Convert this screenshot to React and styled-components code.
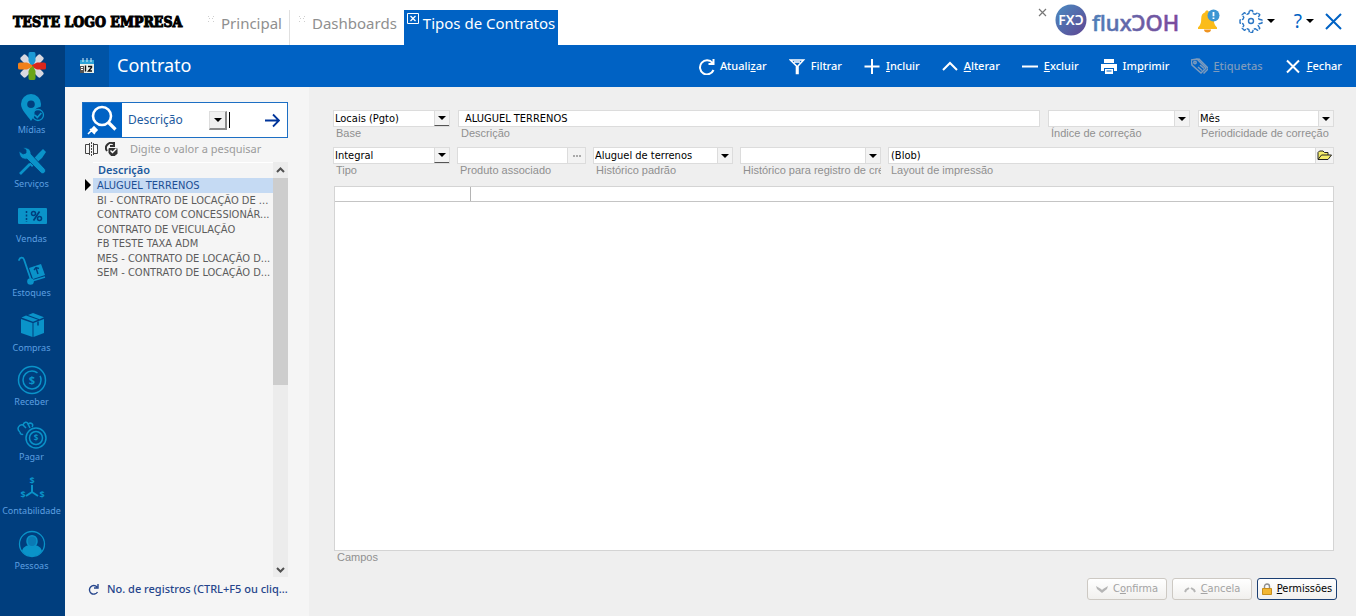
import React from 'react';
import styled, { createGlobalStyle } from 'styled-components';

const GlobalStyle = createGlobalStyle`
  *, *::before, *::after { box-sizing: border-box; }
  body { margin: 0; background: #efefef; }
  button, input, select { font: inherit; color: inherit; margin: 0; padding: 0; border: 0; background: none; outline: none; }
  button { cursor: pointer; }
  svg { display: block; flex: none; }
`;

const ui = '"Noto Sans", "Open Sans", sans-serif';
const tahoma = '"DejaVu Sans Condensed", "DejaVu Sans", sans-serif';
const arial = '"Liberation Sans", Arial, sans-serif';

/* Underlines the access key of a caption */
const Caption = ({ text, accessKey }) => {
  const at = accessKey ? text.indexOf(accessKey) : -1;
  if (at < 0) return <span>{text}</span>;
  return (
    <span>
      {text.slice(0, at)}
      <u>{accessKey}</u>
      {text.slice(at + 1)}
    </span>
  );
};

const Triangle = ({ size = 8 }) => (
  <svg width={size} height={size / 2} viewBox="0 0 8 4" aria-hidden="true">
    <path d="M0 0h8L4 4z" fill="#000" />
  </svg>
);

/* ── Header ── */

const tabs = [
  { name: 'Principal' },
  { name: 'Dashboards' },
  { name: 'Tipos de Contratos', active: true },
];

const Header = () => (
  <TopBar>
    <Company>TESTE LOGO EMPRESA</Company>
    <Tabs>
      {tabs.map((tab) => (
        <Tab key={tab.name} type="button" $active={tab.active}>
          {tab.active ? (
            <svg width="12" height="11" viewBox="0 0 12 11" fill="none" stroke="#fff">
              <path d="M.5.5h11v10H.5z" />
              <path d="M3.5 3l5 5M8.500 3l-5 5" strokeWidth="1.300" />
            </svg>
          ) : (
            <svg width="7" height="7" viewBox="0 0 7 7" fill="#cfcfcf">
              <path d="M0 0h1v1H0zM5 0h1v1H5zM1 2h1v1H1zM4 2h1v1H4zM0 5h1v1H0zM5 5h1v1H5z" />
            </svg>
          )}
          <span>{tab.name}</span>
        </Tab>
      ))}
    </Tabs>
    <HeaderTools>
      <SmallClose type="button" aria-label="Fechar aba">
        <svg width="9" height="9" viewBox="0 0 9 9" stroke="#777" strokeWidth="1.200">
          <path d="M1 1l7 7M8 1L1 8" />
        </svg>
      </SmallClose>
      <svg width="124" height="34" viewBox="0 0 124 34" role="img" aria-label="fluxOOH">
        <defs>
          <linearGradient id="badge" x1="0" y1="0" x2="1" y2="1">
            <stop offset="0" stopColor="#4a8cc2" />
            <stop offset="1" stopColor="#5f4592" />
          </linearGradient>
          <linearGradient id="word" x1="0" y1="0" x2="1" y2="0">
            <stop offset="0" stopColor="#4f7fb8" />
            <stop offset=".55" stopColor="#6a5fa5" />
            <stop offset="1" stopColor="#7b4a9c" />
          </linearGradient>
        </defs>
        <circle cx="16" cy="16" r="15.500" fill="url(#badge)" />
        <text x="16" y="21" textAnchor="middle" fill="#fff" fontFamily={ui} fontSize="14" fontWeight="600">FXƆ</text>
        <text x="37" y="27" fill="url(#word)" stroke="url(#word)" strokeWidth=".5" fontFamily={ui} fontSize="22" fontWeight="500">fluxƆOH</text>
      </svg>
      <IconButton type="button" aria-label="Notificações">
        <svg width="22" height="24" viewBox="0 0 22 24">
          <path d="M9 1.500c1 0 1.800.7 1.800 1.700 3.200.8 5 3.300 5 6.600 0 4.500.8 6.200 3.200 8.700v1.500H0v-1.500c2.400-2.500 3.200-4.200 3.200-8.700 0-3.300 1.200-5.800 4-6.600 0-1 .8-1.700 1.800-1.700z" fill="#fbbc1a" />
          <path d="M6 20.500h7c0 1.800-1.500 3-3.500 3S6 22.300 6 20.500z" fill="#ef9421" />
          <circle cx="15.500" cy="6.500" r="6" fill="#3d97d3" />
          <path d="M15.500 3v4.200M15.500 8.500v1.500" stroke="#fff" strokeWidth="1.800" />
        </svg>
      </IconButton>
      <IconButton type="button" aria-label="Configurações">
        <svg width="24" height="24" viewBox="0 0 24 24" fill="none" stroke="#2b77c5" strokeWidth="1.400" strokeLinejoin="round">
          <path d="M10.500 1.500h3l.7 3 1.900.8 2.600-1.600 2.100 2.100-1.600 2.600.8 1.900 3 .7v3l-3 .7-.8 1.900 1.600 2.600-2.100 2.100-2.600-1.600-1.900.8-.7 3h-3l-.7-3-1.900-.8-2.600 1.600-2.100-2.100 1.600-2.600-.8-1.900-3-.7v-3l3-.7.8-1.900-1.600-2.600 2.100-2.100 2.600 1.600 1.900-.8z" strokeDasharray="5 1" />
          <circle cx="12" cy="12" r="2.500" />
        </svg>
        <Triangle />
      </IconButton>
      <IconButton type="button" aria-label="Ajuda" $wide>
        <Question>?</Question>
        <Triangle />
      </IconButton>
      <IconButton type="button" aria-label="Sair">
        <svg width="17" height="17" viewBox="0 0 17 17" stroke="#0062c4" strokeWidth="2">
          <path d="M1 1l15 15M16 1L1 16" />
        </svg>
      </IconButton>
    </HeaderTools>
  </TopBar>
);

const TopBar = styled.header`
  display: flex;
  height: 45px;
  background: #fff;
  font-family: ${ui};
`;

const Company = styled.div`
  width: 202px;
  padding-left: 13px;
  font: bold 14px/45px "DejaVu Serif Condensed", "DejaVu Serif", serif;
  color: #000;
  white-space: nowrap;
  -webkit-text-stroke: 1px #000;
`;

const Tabs = styled.nav`
  display: flex;
  align-items: flex-end;
`;

const Tab = styled.button`
  display: flex;
  align-items: flex-start;
  gap: ${({ $active }) => ($active ? 4 : 6)}px;
  height: 35px;
  padding: ${({ $active }) => ($active ? '3px 3px 0' : '6px 7px 0 6px')};
  font-size: 15px;
  line-height: 20px;
  white-space: nowrap;
  color: ${({ $active }) => ($active ? '#fff' : '#8f8f8f')};
  background: ${({ $active }) => ($active ? '#0062c4' : 'transparent')};

  &:first-child { border-right: 1px solid #e0e0e0; }
  &:nth-child(2) { padding-left: 9px; }

  span { margin-top: ${({ $active }) => ($active ? 0 : -3)}px; }
`;

const HeaderTools = styled.div`
  display: flex;
  align-items: center;
  gap: 19px;
  margin-left: auto;
  padding: 0 14px 3px 0;
`;

const SmallClose = styled.button`
  align-self: flex-start;
  margin: 8px -11px 0 0;
`;

const IconButton = styled.button`
  display: flex;
  align-items: center;
  gap: 4px;
  margin-right: ${({ $wide }) => ($wide ? -8 : 0)}px;
`;

const Question = styled.span`
  font-size: 19px;
  line-height: 24px;
  color: #0062c4;
`;

/* ── Module sidebar ── */

const iconColor = '#0a93c9';

const modules = [
  {
    name: 'Mídias',
    icon: (
      <>
        <path fillRule="evenodd" d="M14 1a10 10 0 0 0-10 10c0 6 6 11 10 17 1.200-2 2.500-3.500 4-5.500a6 6 0 0 1 5.500-8.500c.4-1 .5-2 .5-3A10 10 0 0 0 14 1zm0 6.500a3.800 3.800 0 1 1 0 7.600 3.800 3.800 0 0 1 0-7.600z" fill={iconColor} />
        <circle cx="21" cy="22" r="5.500" fill="none" stroke={iconColor} strokeWidth="1.300" />
        <path d="M18 22l2.300 2.500 4-4.500" fill="none" stroke={iconColor} strokeWidth="1.800" />
      </>
    ),
  },
  {
    name: 'Serviços',
    icon: (
      <>
        <path d="M26 2l3 3-4 6-10 9-3-3 9-10z" fill={iconColor} />
        <path d="M13 17L3 27" stroke={iconColor} strokeWidth="2.600" />
        <path d="M2 4l4 3 3-1 0-3-3-2c4-1 8 1 8 6l14 15c2 3-2 6-4 4L10 12C6 13 2 10 2 4z" fill={iconColor} stroke="#003e7e" strokeWidth=".8" />
      </>
    ),
  },
  {
    name: 'Vendas',
    icon: (
      <>
        <path d="M2 6h27a1 1 0 0 1 1 1v14a1 1 0 0 1-1 1H2a1 1 0 0 1-1-1V7a1 1 0 0 1 1-1z" fill={iconColor} />
        <path d="M9.500 9v11" stroke="#003e7e" strokeWidth="1.500" strokeDasharray="2 1.500" />
        <path d="M22.500 9.500l-6 9" stroke="#003e7e" strokeWidth="1.700" />
        <circle cx="16.500" cy="11.500" r="2" fill="none" stroke="#003e7e" strokeWidth="1.500" />
        <circle cx="22.500" cy="16.500" r="2" fill="none" stroke="#003e7e" strokeWidth="1.500" />
      </>
    ),
  },
  {
    name: 'Estoques',
    icon: (
      <>
        <path d="M2 4c1-3 4-3 5-.5L14 24" fill="none" stroke={iconColor} strokeWidth="1.800" strokeLinecap="round" />
        <path d="M12 12l12-4 4 11-12 4z" fill={iconColor} />
        <path d="M21 18l-2-6m-2 2l2-2.500 3 1" fill="none" stroke="#003e7e" strokeWidth="1.400" />
        <path d="M15 25l13-4" stroke={iconColor} strokeWidth="1.500" />
        <circle cx="13.500" cy="25.500" r="3.300" fill={iconColor} />
      </>
    ),
  },
  {
    name: 'Compras',
    icon: (
      <>
        <path d="M4 8l11.500 4v14L4 22zM27 8l-10.500 4v14L27 22zM4.500 6.500L9 4.500l12 4.300-5 2zM11 4l5-2 11 4.300-4.500 1.900z" fill={iconColor} />
        <path d="M21 10.500v4" stroke="#003e7e" strokeWidth="1.500" />
      </>
    ),
  },
  {
    name: 'Receber',
    icon: (
      <g fill="none" stroke={iconColor}>
        <circle cx="15" cy="15" r="13.500" strokeWidth="1.500" />
        <circle cx="15" cy="15" r="9" strokeWidth="1.500" strokeDasharray="48 4" />
        <text x="15" y="19" textAnchor="middle" fill={iconColor} stroke="none" fontSize="11" fontWeight="700">$</text>
      </g>
    ),
  },
  {
    name: 'Pagar',
    icon: (
      <g fill="none" stroke={iconColor} strokeWidth="1.500">
        <path d="M3 12C-1 9 2 4 6 5c1-3 4-4 5-1 3-2 6 0 4 3M3 12c0 2 2 3 3 2M6 5l3 3M11 4l2 4" />
        <circle cx="19" cy="18" r="10" />
        <circle cx="19" cy="18" r="6.500" />
        <text x="19" y="21" textAnchor="middle" fill={iconColor} stroke="none" fontSize="8" fontWeight="700">$</text>
      </g>
    ),
  },
  {
    name: 'Contabilidade',
    icon: (
      <g fill={iconColor} fontSize="9" fontWeight="700" textAnchor="middle">
        <text x="15" y="10">$</text>
        <text x="6" y="24">$</text>
        <text x="25" y="24">$</text>
        <path d="M15 11v7l-6 4M15 18l6 4" fill="none" stroke={iconColor} strokeWidth="2" />
      </g>
    ),
  },
  {
    name: 'Pessoas',
    icon: (
      <>
        <circle cx="15" cy="15" r="12.500" fill="none" stroke={iconColor} strokeWidth="1.300" />
        <path d="M5 22c1-4 4-5 6.500-6 2 1.800 5 1.800 7 0 2.500 1 5.500 2 6.500 6-4 7-16 7-20 0z" fill={iconColor} />
        <path d="M10 12c0-7 10-7 10 0 0 2-1 4-2.500 5-1.500 1-3.500 1-5 0C11 16 10 14 10 12z" fill="#0a7ab5" stroke={iconColor} strokeWidth="1.500" />
      </>
    ),
  },
];

const petals = ['#d8d8e0', '#1c9ad6', '#d8d8e0', '#d9261c', '#d8d8e0', '#6aa517', '#d8d8e0', '#f08019'];

const Sidebar = () => (
  <SideNav>
    <Brand>
      <svg width="32" height="32" viewBox="-16 -16 32 32" aria-hidden="true">
        {[0, 2, 4, 6, 1, 3, 5, 7].map((i) => (
          <path key={i} d="M-1 0L-3.500-5v-7Q-3.500-14-2-14h4Q3.500-14 3.500-12v7L1 0z" fill={petals[i]} transform={`rotate(${(i - 1) * 45})`} />
        ))}
      </svg>
    </Brand>
    <ModuleList>
      {modules.map(({ name, icon }) => (
        <ModuleLink key={name} href="#">
          <svg width="30" height="30" viewBox="0 0 30 30" aria-hidden="true">{icon}</svg>
          {name}
        </ModuleLink>
      ))}
    </ModuleList>
  </SideNav>
);

const SideNav = styled.aside`
  width: 65px;
  flex: none;
  padding-right: 2px;
  background: #003e7e;
  font-family: ${ui};
`;

const Brand = styled.div`
  display: grid;
  place-items: center;
  height: 42px;
`;

const ModuleList = styled.nav`
  display: flex;
  flex-direction: column;
  height: 490px;
`;

const ModuleLink = styled.a`
  display: flex;
  flex: 1;
  flex-direction: column;
  align-items: center;
  padding-top: 6px;
  font-size: 9px;
  line-height: 14px;
  color: #5c9fe0;
  text-decoration: none;
`;

/* ── Blue toolbar ── */

const actions = [
  { text: 'Atualizar', accessKey: 'z', icon: <path d="M14.500 5A7 7 0 1 0 15.500 12M15.500 1v5h-5" strokeWidth="2" /> },
  { text: 'Filtrar', icon: <path d="M1.500 2h13L9 8v7.500H7.500V8zM5 4h6" strokeWidth="1.600" /> },
  { text: 'Incluir', accessKey: 'I', icon: <path d="M8 1v15M.500 8.500h15" strokeWidth="2" /> },
  { text: 'Alterar', accessKey: 'A', icon: <path d="M1 12l7-7 7 7" strokeWidth="2" /> },
  { text: 'Excluir', accessKey: 'E', icon: <path d="M0 8.500h16" strokeWidth="2" /> },
  {
    text: 'Imprimir',
    accessKey: 'p',
    icon: (
      <g stroke="none" fill="#fff">
        <path d="M3 1h10v4H3zM0 6h16v7h-3v-3H3v3H0zM4 11h8v5H4z" />
        <path d="M5.500 13h5" stroke="#0062c4" />
      </g>
    ),
  },
  {
    text: 'Etiquetas',
    accessKey: 'E',
    disabled: true,
    icon: (
      <g strokeWidth="1.500">
        <path d="M0 2l6-1 9 9-5 5-9-8z" />
        <path d="M5 1.500l3-.5 9.500 9.500-5 5M7 9l4 3.500M9 7l4 3.500" />
        <circle cx="4" cy="4.500" r="1.200" />
      </g>
    ),
  },
  { text: 'Fechar', accessKey: 'F', icon: <path d="M2 2.500l12 12M14 2.500l-12 12" strokeWidth="2" /> },
];

const Toolbar = () => (
  <ToolbarBar>
    <ModuleIcon>
      <svg width="16" height="16" viewBox="0 0 16 16" aria-hidden="true">
        <path d="M1 2h14v13H1z" fill="#e9efe9" />
        <path d="M1 2h14v4H1z" fill="#2ba3d8" />
        <path d="M4 0v4M8 0v4M12 0v4" stroke="#d9eef7" />
        <path d="M1 8h4v7H1z" fill="#555" />
        <path d="M2 9h2v1H2zM2 11h2v1H2z" fill="#fff" />
        <path d="M6.500 7.500v6M9 8.500h3.500v1L9.500 13H13" fill="none" stroke="#111" strokeWidth="1.400" />
      </svg>
    </ModuleIcon>
    <PageTitle>Contrato</PageTitle>
    <Actions>
      {actions.map(({ text, accessKey, disabled, icon }) => (
        <Action key={text} type="button" disabled={disabled}>
          <svg width="17" height="17" viewBox="0 0 17 17" fill="none" stroke="currentColor" aria-hidden="true">{icon}</svg>
          <Caption text={text} accessKey={accessKey} />
        </Action>
      ))}
    </Actions>
  </ToolbarBar>
);

const ToolbarBar = styled.div`
  display: flex;
  height: 42px;
  background: #0062c4;
  color: #fff;
  font-family: ${ui};
`;

const ModuleIcon = styled.div`
  display: grid;
  place-items: center;
  width: 44px;
  background: #0054a6;
`;

const PageTitle = styled.h1`
  margin: 0;
  padding-left: 8px;
  font-size: 18px;
  font-weight: 400;
  line-height: 40px;
`;

const Actions = styled.div`
  display: flex;
  align-items: center;
  gap: 22px;
  margin-left: auto;
  padding-right: 14px;
`;

const Action = styled.button`
  display: flex;
  align-items: center;
  gap: 5px;
  font-size: 11px;
  font-weight: 500;
  line-height: 16px;

  &:disabled { color: #7d9bbd; cursor: default; }
`;

/* ── Record list ── */

const records = [
  'ALUGUEL TERRENOS',
  'BI - CONTRATO DE LOCAÇÃO DE ...',
  'CONTRATO COM CONCESSIONÁR...',
  'CONTRATO DE VEICULAÇÃO',
  'FB TESTE TAXA ADM',
  'MES - CONTRATO DE LOCAÇÃO D...',
  'SEM - CONTRATO DE LOCAÇÃO D...',
];

const RecordPanel = () => (
  <Panel>
    <SearchBox>
      <SearchIcon>
        <svg width="34" height="32" viewBox="0 0 34 32" fill="none" stroke="#fff" aria-hidden="true">
          <circle cx="16" cy="12" r="9" strokeWidth="2.600" />
          <path d="M22.500 18.500l7 7" strokeWidth="3.200" />
          <path d="M2 30l4-4M4 25l5 5M5 26l3-3 3 3-3 3z" strokeWidth="1.600" fill="#fff" />
        </svg>
      </SearchIcon>
      <SearchField>
        <select aria-label="Campo da pesquisa">
          <option>Descrição</option>
        </select>
        <RaisedArrow><Triangle /></RaisedArrow>
      </SearchField>
      <Caret />
      <SearchInput id="search" />
      <SearchGo type="button" aria-label="Pesquisar">
        <svg width="15" height="15" viewBox="0 0 15 15" fill="none" stroke="#00349a" strokeWidth="1.800">
          <path d="M0 7.500h14M8 1.500l6 6-6 6" />
        </svg>
      </SearchGo>
    </SearchBox>
    <SearchHint>
      <svg width="13" height="14" viewBox="0 0 13 14" fill="none" stroke="#444">
        <path d="M4 2.500H.500v9H4M9 2.500h3.500v9H9M4.500 1v12M8.500 1v12" />
        <path d="M6.500 0v14" strokeDasharray="2 1" />
      </svg>
      <svg width="14" height="14" viewBox="0 0 14 14" fill="none" stroke="#333">
        <path d="M2 9A5 5 0 0 1 9 2M9 0v4H5" strokeWidth="2" />
        <path d="M4 6.500h8v5L10 13.500H6L4 11z" fill="#333" />
        <path d="M5.500 8.500l2 2 4-4" stroke="#fff" strokeWidth="1.400" />
      </svg>
      <label htmlFor="search">Digite o valor a pesquisar</label>
    </SearchHint>
    <ListArea>
      <RecordTable>
        <thead>
          <tr>
            <td />
            <th scope="col">Descrição</th>
          </tr>
        </thead>
        <tbody>
          {records.map((name, i) => (
            <RecordRow key={name} $selected={i === 0}>
              <td>
                {i === 0 && (
                  <svg width="6" height="12" viewBox="0 0 6 12"><path d="M0 0l6 6-6 6z" /></svg>
                )}
              </td>
              <td>{name}</td>
            </RecordRow>
          ))}
        </tbody>
      </RecordTable>
      <Scrollbar>
        <svg width="15" height="16" viewBox="0 0 15 16" fill="none" stroke="#505050" strokeWidth="2"><path d="M4 10l3.500-3.500L11 10" /></svg>
        <Track><Thumb /></Track>
        <svg width="15" height="16" viewBox="0 0 15 16" fill="none" stroke="#505050" strokeWidth="2"><path d="M4 7l3.500 3.500L11 7" /></svg>
      </Scrollbar>
    </ListArea>
    <RecordCount type="button">
      <svg width="11" height="11" viewBox="0 0 11 11" fill="none" stroke="#26468c" strokeWidth="1.400">
        <path d="M9 3A4.300 4.300 0 1 0 9.500 8M10 0v4H6" />
      </svg>
      <span>No. de registros (CTRL+F5 ou cliq...</span>
    </RecordCount>
  </Panel>
);

const Panel = styled.section`
  display: flex;
  flex-direction: column;
  width: 244px;
  flex: none;
  padding: 15px 20px 18px 17px;
  background: #f5f5f5;
  font-family: ${ui};
`;

const SearchBox = styled.div`
  display: flex;
  align-items: center;
  height: 36px;
  margin-right: 1px;
  border: 1px solid #1d6fc4;
  background: #fff;
`;

const SearchIcon = styled.div`
  display: grid;
  place-items: center;
  align-self: stretch;
  width: 39px;
  background: #0062c4;
`;

const SearchField = styled.div`
  display: grid;
  grid-template-columns: 1fr 18px;
  align-items: center;
  width: 105px;

  select {
    grid-area: 1 / 1 / 2 / 3;
    appearance: none;
    padding-left: 6px;
    font-size: 12px;
    line-height: 20px;
    color: #1d5a9e;
  }
`;

const RaisedArrow = styled.span`
  grid-area: 1 / 2;
  display: grid;
  place-items: center;
  height: 19px;
  border: 1px solid #ddd;
  border-width: 1px 2px 2px 1px;
  border-right-color: #8a8a8a;
  border-bottom-color: #8a8a8a;
  background: #f0f0f0;
  pointer-events: none;
`;

const Caret = styled.span`
  width: 1px;
  height: 16px;
  margin-left: 2px;
  background: #000;
`;

const SearchInput = styled.input`
  flex: 1;
  min-width: 0;
  padding-left: 2px;
  font-size: 13px;
`;

const SearchGo = styled.button`
  padding: 0 7px;
`;

const SearchHint = styled.div`
  display: flex;
  align-items: center;
  gap: 7px;
  height: 24px;
  padding: 0 0 2px 3px;
  font-size: 11px;
  line-height: 16px;
  color: #9b9b9b;

  label { margin-left: 4px; white-space: nowrap; }
`;

const ListArea = styled.div`
  display: flex;
  flex: 1;
  min-height: 0;
  margin-right: 1px;
`;

const RecordTable = styled.table`
  flex: 1;
  display: block;
  min-width: 0;
  border-collapse: collapse;
  font-family: ${tahoma};
  font-size: 11px;
  line-height: 14px;
  color: #5c5c5c;

  thead, tbody { display: block; }
  tr { display: grid; grid-template-columns: 11px minmax(0, 1fr); }
  td, th { padding: 0; }

  thead tr { height: 16px; }

  th {
    padding-left: 5px;
    border-top: 1px solid #fff;
    font: 600 11px/14px ${ui};
    text-align: left;
    color: #1d5a9e;
  }
`;

const RecordRow = styled.tr`
  height: 15px;
  color: ${({ $selected }) => ($selected ? '#1d4f94' : 'inherit')};

  &:nth-child(even) { height: 14px; }

  td:first-child { padding: 1px 0 0 3px; }

  td:last-child {
    padding: 1px 0 0 4px;
    white-space: nowrap;
    background: ${({ $selected }) => ($selected ? '#c5daf3' : 'transparent')};
  }
`;

const Scrollbar = styled.div`
  display: flex;
  flex-direction: column;
  width: 15px;
  background: #ececec;
`;

const Track = styled.div`
  flex: 1;
`;

const Thumb = styled.div`
  height: 54%;
  background: #cdcdcd;
`;

const RecordCount = styled.button`
  display: flex;
  align-items: center;
  gap: 8px;
  margin-top: 3px;
  padding-left: 6px;
  font-size: 11px;
  font-weight: 500;
  line-height: 18px;
  color: #26468c;
  white-space: nowrap;
`;

/* ── Form ── */

const SelectField = ({ id, label, value, width, raised }) => (
  <Field $width={width}>
    <SelectShell>
      <select id={id} defaultValue={value}>
        <option>{value}</option>
      </select>
      <ArrowCell $raised={raised}><Triangle /></ArrowCell>
    </SelectShell>
    <label htmlFor={id}>{label}</label>
  </Field>
);

const InputField = ({ id, label, value, width, button, indent }) => (
  <Field $width={width}>
    <InputShell $indent={indent}>
      <input id={id} defaultValue={value} />
      {button}
    </InputShell>
    <label htmlFor={id}>{label}</label>
  </Field>
);

const ContractForm = () => (
  <Form onSubmit={(e) => e.preventDefault()}>
    <FieldRow $gap={8}>
      <SelectField id="base" label="Base" value="Locais (Pgto)" width={117} raised />
      <InputField id="descricao" label="Descrição" value="ALUGUEL TERRENOS" indent={6} />
      <SelectField id="indice" label="Índice de correção" value="" width={142} />
      <SelectField id="periodicidade" label="Periodicidade de correção" value="Mês" width={136} />
    </FieldRow>
    <FieldRow $gap={7}>
      <SelectField id="tipo" label="Tipo" value="Integral" width={117} raised />
      <InputField
        id="produto"
        label="Produto associado"
        value=""
        width={129}
        indent={2}
        button={
          <CellButton type="button" aria-label="Localizar produto">
            <svg width="8" height="2" viewBox="0 0 8 2" fill="#aaa"><path d="M0 0h2v2H0zM3 0h2v2H3zM6 0h2v2H6z" /></svg>
          </CellButton>
        }
      />
      <SelectField id="historico" label="Histórico padrão" value="Aluguel de terrenos" width={140} />
      <SelectField id="registro" label="Histórico para registro de cré" value="" width={141} />
      <InputField
        id="layout"
        label="Layout de impressão"
        value="(Blob)"
        indent={2}
        button={
          <CellButton type="button" aria-label="Abrir layout">
            <svg width="15" height="11" viewBox="0 0 15 11" stroke="#222" fill="#f4ec6a" strokeLinejoin="round">
              <path d="M1 9V2.500L2.500 1H6l1.500 1.500H11V5" />
              <path d="M1 9.500L4.500 5h10L11 9.500z" />
            </svg>
          </CellButton>
        }
      />
    </FieldRow>
    <DataGrid aria-labelledby="campos">
      <thead>
        <tr>
          <th scope="col" aria-label="Campo" />
          <th scope="col" aria-label="Valor" />
        </tr>
      </thead>
      <tbody />
    </DataGrid>
    <GridLabel id="campos">Campos</GridLabel>
    <FormButtons>
      <FormButton type="button" disabled>
        <svg width="12" height="8" viewBox="0 0 12 8" fill="#b5b5b5"><path d="M0 1l5 3 1 1 1-1 5-3-1 3-5 4-5-4z" /></svg>
        <Caption text="Confirma" accessKey="o" />
      </FormButton>
      <FormButton type="button" disabled>
        <svg width="12" height="8" viewBox="0 0 12 8" fill="none" stroke="#b5b5b5" strokeWidth="2"><path d="M1 7l1-2 3-2M7 3l3 2 1 2" /></svg>
        <Caption text="Cancela" accessKey="C" />
      </FormButton>
      <FormButton type="button">
        <svg width="10" height="12" viewBox="0 0 10 12">
          <path d="M2.500 6V3.500a2.500 2.500 0 0 1 5 0V6" fill="none" stroke="#8e8e8e" strokeWidth="1.400" />
          <path d="M.5 5.500h9v6h-9z" fill="#f2b632" stroke="#c98f1d" />
        </svg>
        <Caption text="Permissões" accessKey="P" />
      </FormButton>
    </FormButtons>
  </Form>
);

const Form = styled.form`
  display: flex;
  flex: 1;
  flex-direction: column;
  min-width: 0;
  padding: 23px 22px 16px 24px;
  background: #efefef;
  font-family: ${tahoma};
  font-size: 11px;
`;

const FieldRow = styled.div`
  display: flex;
  gap: ${({ $gap }) => $gap}px;
  height: 37px;
`;

const Field = styled.div`
  flex: ${({ $width }) => ($width ? `0 0 ${$width}px` : '1 1 0')};
  min-width: 0;

  label {
    display: block;
    padding-left: 3px;
    overflow: hidden;
    white-space: nowrap;
    font: 11px/12px ${arial};
    color: #8f8f8f;
  }
`;

const SelectShell = styled.div`
  display: grid;
  grid-template-columns: minmax(0, 1fr) 15px;
  height: 17px;
  border: 1px solid #dcdcdc;
  background: #fff;

  select {
    grid-area: 1 / 1 / 2 / 3;
    appearance: none;
    padding-left: 1px;
    line-height: 15px;
    color: #000;
  }
`;

const ArrowCell = styled.span`
  grid-area: 1 / 2;
  display: grid;
  place-items: center;
  border-left: 1px solid #dcdcdc;
  border-bottom: ${({ $raised }) => ($raised ? '1px solid #555' : '0')};
  background: #f3f3f3;
  pointer-events: none;
`;

const InputShell = styled.div`
  display: flex;
  height: 17px;
  border: 1px solid #dcdcdc;
  background: #fff;

  input {
    flex: 1;
    min-width: 0;
    padding-left: ${({ $indent }) => $indent}px;
    color: #000;
  }
`;

const CellButton = styled.button`
  display: grid;
  place-items: center;
  width: 18px;
  border-left: 1px solid #dcdcdc;
  background: #f3f3f3;
`;

const DataGrid = styled.table`
  display: block;
  flex: 1;
  margin: 2px 0 0 1px;
  border: 1px solid #d4d4d4;
  background: #fff;

  thead { display: block; }

  tr {
    display: flex;
    height: 15px;
    border-bottom: 1px solid #c4c4c4;
  }

  th { flex: 1; padding: 0; }

  th:first-child {
    flex: 0 0 136px;
    border-right: 1px solid #b4b4b4;
  }
`;

const GridLabel = styled.span`
  padding-left: 4px;
  font: 11px/12px ${arial};
  color: #8f8f8f;
`;

const FormButtons = styled.div`
  display: flex;
  justify-content: flex-end;
  gap: 5px;
  margin: 15px -3px 0 0;
`;

const FormButton = styled.button`
  display: flex;
  align-items: center;
  justify-content: center;
  gap: 5px;
  width: 80px;
  height: 22px;
  border: 1px solid #1b3f73;
  border-radius: 3px;
  background: linear-gradient(#fff, #f1f0ee);
  font: 11px/16px ${tahoma};
  color: #000;

  &:disabled {
    border-color: #cdc9c3;
    color: #a3a3a3;
    cursor: default;
  }
`;

/* ── Page ── */

const App = () => (
  <Page>
    <GlobalStyle />
    <Header />
    <Body>
      <Sidebar />
      <Main>
        <Toolbar />
        <Content>
          <RecordPanel />
          <ContractForm />
        </Content>
      </Main>
    </Body>
  </Page>
);

const Page = styled.div`
  display: flex;
  flex-direction: column;
  min-height: 100vh;
`;

const Body = styled.div`
  display: flex;
  flex: 1;
`;

const Main = styled.main`
  display: flex;
  flex: 1;
  flex-direction: column;
  min-width: 0;
`;

const Content = styled.div`
  display: flex;
  flex: 1;
`;

export default App;
